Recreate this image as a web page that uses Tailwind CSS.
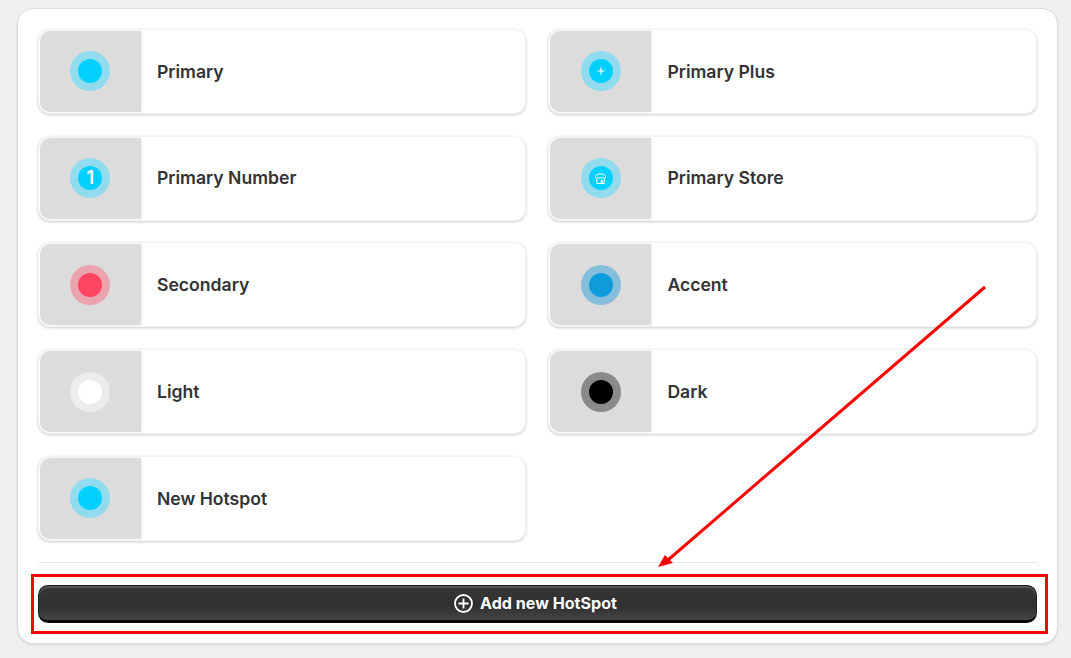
<!DOCTYPE html>
<html lang="en">

<head>
    <meta charset="UTF-8">
    <meta name="viewport" content="width=device-width, initial-scale=1.0">
    <title>Hotspots</title>
    <script src="https://cdn.jsdelivr.net/npm/@tailwindcss/browser@4"></script>
</head>

<body class="bg-[#f0f0f0] font-['Inter',sans-serif] h-[658px] overflow-hidden">
    <div class="relative h-[658px] pt-[8px] pl-[17px]">
        <div class="w-[1041px] h-[636px] bg-white rounded-[16px] border border-[#dedede] shadow-[0_1px_2px_rgba(0,0,0,0.12)] px-[20px] pt-[19.75px]">
            <div class="grid grid-cols-[488.4px_488.6px] gap-x-[22px] gap-y-[21.75px]">

                <div class="h-[85px] flex items-center bg-white rounded-[12px] border border-[#f3f3f3] shadow-[0_1px_3px_rgba(0,0,0,0.2)] p-px">
                    <div class="w-[100.6px] h-[81px] bg-[#dcdcdc] rounded-l-[10px] flex items-center justify-center shadow-[1px_0_3px_rgba(0,0,0,0.08)]">
                        <div class="w-10 h-10 rounded-full bg-[#90dcee] flex items-center justify-center">
                            <div class="w-6 h-6 rounded-full bg-[#00d0ff]"></div>
                        </div>
                    </div>
                    <span class="ml-[16.4px] mt-[1.2px] text-[17.6px] font-semibold text-[#333]">Primary</span>
                </div>

                <div class="h-[85px] flex items-center bg-white rounded-[12px] border border-[#f3f3f3] shadow-[0_1px_3px_rgba(0,0,0,0.2)] p-px">
                    <div class="w-[100.6px] h-[81px] bg-[#dcdcdc] rounded-l-[10px] flex items-center justify-center shadow-[1px_0_3px_rgba(0,0,0,0.08)]">
                        <div class="w-10 h-10 rounded-full bg-[#90dcee] flex items-center justify-center">
                            <div class="w-6 h-6 rounded-full bg-[#00d0ff] flex items-center justify-center">
                                <svg width="8" height="8" viewBox="0 0 8 8" fill="none" stroke="white" stroke-width="1.2"><path d="M4 .5v7M.5 4h7"/></svg>
                            </div>
                        </div>
                    </div>
                    <span class="ml-[16.4px] mt-[1.2px] text-[17.6px] font-semibold text-[#333]">Primary Plus</span>
                </div>

                <div class="h-[85px] flex items-center bg-white rounded-[12px] border border-[#f3f3f3] shadow-[0_1px_3px_rgba(0,0,0,0.2)] p-px">
                    <div class="w-[100.6px] h-[81px] bg-[#dcdcdc] rounded-l-[10px] flex items-center justify-center shadow-[1px_0_3px_rgba(0,0,0,0.08)]">
                        <div class="w-10 h-10 rounded-full bg-[#90dcee] flex items-center justify-center">
                            <div class="w-6 h-6 rounded-full bg-[#00d0ff] flex items-center justify-center text-white text-[18px] leading-none font-semibold">1</div>
                        </div>
                    </div>
                    <span class="ml-[16.4px] mt-[1.2px] text-[17.6px] font-semibold text-[#333]">Primary Number</span>
                </div>

                <div class="h-[85px] flex items-center bg-white rounded-[12px] border border-[#f3f3f3] shadow-[0_1px_3px_rgba(0,0,0,0.2)] p-px">
                    <div class="w-[100.6px] h-[81px] bg-[#dcdcdc] rounded-l-[10px] flex items-center justify-center shadow-[1px_0_3px_rgba(0,0,0,0.08)]">
                        <div class="w-10 h-10 rounded-full bg-[#90dcee] flex items-center justify-center">
                            <div class="w-6 h-6 rounded-full bg-[#00d0ff] flex items-center justify-center">
                                <svg width="11" height="11" viewBox="0 0 11 11" fill="none" stroke="white" stroke-width="1"><path d="M2.500 1h6L10.500 3.500a1.200 1.200 0 0 1-2.500.8 1.500 1.500 0 0 1-2.500 0 1.500 1.500 0 0 1-2.500 0A1.200 1.200 0 0 1 .5 3.500z"/><path d="M1.800 5.500v5h7.400v-5"/><path d="M5.800 7h2v3.500h-2z" fill="white" stroke="none"/></svg>
                            </div>
                        </div>
                    </div>
                    <span class="ml-[16.4px] mt-[1.2px] text-[17.6px] font-semibold text-[#333]">Primary Store</span>
                </div>

                <div class="h-[85px] flex items-center bg-white rounded-[12px] border border-[#f3f3f3] shadow-[0_1px_3px_rgba(0,0,0,0.2)] p-px">
                    <div class="w-[100.6px] h-[81px] bg-[#dcdcdc] rounded-l-[10px] flex items-center justify-center shadow-[1px_0_3px_rgba(0,0,0,0.08)]">
                        <div class="w-10 h-10 rounded-full bg-[#eba4ae] flex items-center justify-center">
                            <div class="w-6 h-6 rounded-full bg-[#ff4560]"></div>
                        </div>
                    </div>
                    <span class="ml-[16.4px] mt-[1.2px] text-[17.6px] font-semibold text-[#333]">Secondary</span>
                </div>

                <div class="h-[85px] flex items-center bg-white rounded-[12px] border border-[#f3f3f3] shadow-[0_1px_3px_rgba(0,0,0,0.2)] p-px">
                    <div class="w-[100.6px] h-[81px] bg-[#dcdcdc] rounded-l-[10px] flex items-center justify-center shadow-[1px_0_3px_rgba(0,0,0,0.08)]">
                        <div class="w-10 h-10 rounded-full bg-[#85bedb] flex items-center justify-center">
                            <div class="w-6 h-6 rounded-full bg-[#0e9bdc]"></div>
                        </div>
                    </div>
                    <span class="ml-[16.4px] mt-[1.2px] text-[17.6px] font-semibold text-[#333]">Accent</span>
                </div>

                <div class="h-[85px] flex items-center bg-white rounded-[12px] border border-[#f3f3f3] shadow-[0_1px_3px_rgba(0,0,0,0.2)] p-px">
                    <div class="w-[100.6px] h-[81px] bg-[#dcdcdc] rounded-l-[10px] flex items-center justify-center shadow-[1px_0_3px_rgba(0,0,0,0.08)]">
                        <div class="w-10 h-10 rounded-full bg-[#ececec] flex items-center justify-center">
                            <div class="w-6 h-6 rounded-full bg-white"></div>
                        </div>
                    </div>
                    <span class="ml-[16.4px] mt-[1.2px] text-[17.6px] font-semibold text-[#333]">Light</span>
                </div>

                <div class="h-[85px] flex items-center bg-white rounded-[12px] border border-[#f3f3f3] shadow-[0_1px_3px_rgba(0,0,0,0.2)] p-px">
                    <div class="w-[100.6px] h-[81px] bg-[#dcdcdc] rounded-l-[10px] flex items-center justify-center shadow-[1px_0_3px_rgba(0,0,0,0.08)]">
                        <div class="w-10 h-10 rounded-full bg-[#8a8a8a] flex items-center justify-center">
                            <div class="w-6 h-6 rounded-full bg-black"></div>
                        </div>
                    </div>
                    <span class="ml-[16.4px] mt-[1.2px] text-[17.6px] font-semibold text-[#333]">Dark</span>
                </div>

                <div class="h-[85px] flex items-center bg-white rounded-[12px] border border-[#f3f3f3] shadow-[0_1px_3px_rgba(0,0,0,0.2)] p-px">
                    <div class="w-[100.6px] h-[81px] bg-[#dcdcdc] rounded-l-[10px] flex items-center justify-center shadow-[1px_0_3px_rgba(0,0,0,0.08)]">
                        <div class="w-10 h-10 rounded-full bg-[#90dcee] flex items-center justify-center">
                            <div class="w-6 h-6 rounded-full bg-[#00d0ff]"></div>
                        </div>
                    </div>
                    <span class="ml-[16.4px] mt-[1.2px] text-[17.6px] font-semibold text-[#333]">New Hotspot</span>
                </div>
            </div>

            <div class="mt-[21.25px] border-t border-[#e8e8e8]"></div>

            <button class="mt-[22px] w-full h-[38px] pr-[4px] rounded-[10px] flex items-center justify-center gap-[7px] text-white text-[16.1px] font-bold border border-[#1c1c1c] border-b-[3px] border-b-[#0a0a0a] bg-[linear-gradient(to_bottom,#363636_0%,#303030_60%,#464646_100%)] shadow-[inset_0_2px_0_#565656]">
                <svg width="19" height="19" viewBox="0 0 19 19" fill="none" stroke="white" stroke-width="1.8"><circle cx="9.500" cy="9.500" r="8.500"/><path d="M9.500 4.500v10M4.500 9.500h10"/></svg>
                Add new HotSpot
            </button>
        </div>

        <!-- annotations -->
        <div class="absolute left-[31px] top-[574px] w-[1017px] h-[60px] border-[3px] border-[#ff0000]"></div>
        <svg class="absolute left-0 top-0" width="1071" height="658" fill="none">
            <path d="M985 287L668 560" stroke="#ff0000" stroke-width="3"/>
            <path d="M658 567L665 555L673 563z" fill="#ff0000"/>
        </svg>
    </div>
</body>

</html>
